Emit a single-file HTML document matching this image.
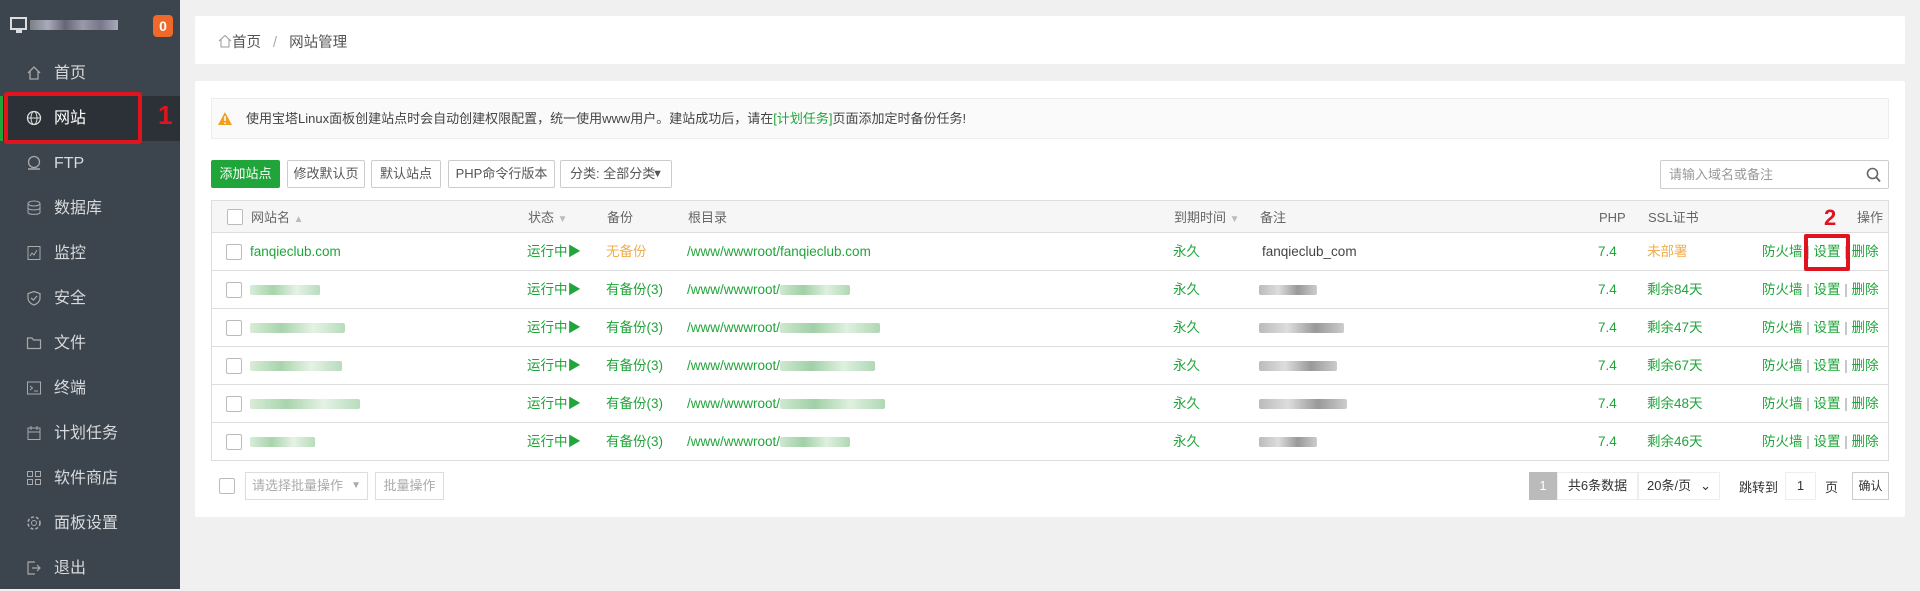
<!DOCTYPE html>
<html><head><meta charset="utf-8"><style>
*{box-sizing:border-box;margin:0;padding:0}
body{width:1920px;height:589px;background:#f0f0f0;font-family:"Liberation Sans","Noto Sans CJK SC",sans-serif;font-size:14px;color:#555;position:relative;overflow:hidden}
.abs{position:absolute}
#side{left:0;top:0;width:180px;height:589px;background:#3c444d}
#logo{left:0;top:0;width:180px;height:51px;background:#3c444d}
.mi{position:absolute;left:0;width:180px;height:45px;color:#d8dadc;font-size:16px;line-height:45px;padding-left:54px}
.mi svg{position:absolute;left:26px;top:14px}
.card{background:#fff;border-radius:2px}
.btn{position:absolute;top:160px;height:28px;border:1px solid #ccc;background:#fff;font-size:13px;line-height:26px;text-align:center;color:#555;border-radius:2px}
.row{position:absolute;left:211px;width:1678px;height:38px;border-bottom:1px solid #ddd;line-height:38px;font-size:13.5px}
.row span{position:absolute}
.g{color:#20a53a}.o{color:#f0ad4e}
.cb{position:absolute;left:15px;top:11px;width:16px;height:16px;border:1px solid #bbb;border-radius:2px;background:#fff}
.blur{display:inline-block;height:10px;vertical-align:middle;border-radius:2px}
</style></head><body>
<div id="side" class="abs"></div>
<div id="logo" class="abs">
 <svg class="abs" style="left:10px;top:17px" width="18" height="17"><rect x="1" y="1" width="15" height="11" fill="none" stroke="#ddd" stroke-width="2"/><rect x="6" y="13" width="6" height="3" fill="#ddd"/></svg>
 <div class="abs" style="left:30px;top:20px;width:88px;height:10px;background:linear-gradient(90deg,#7a8088,#aab 20%,#667 40%,#99a 60%,#778 80%,#aab)"></div>
 <div class="abs" style="left:153px;top:15px;width:20px;height:22px;background:#f0682a;border-radius:4px;color:#fff;font-weight:bold;text-align:center;line-height:22px;font-size:14px">0</div>
</div>
<div class="abs" style="left:0;top:96px;width:180px;height:45px;background:#2c3137;border-left:3px solid #20a53a"></div>
<div class="mi" style="top:51px"><svg width="16" height="16"><path d="M2 8L8 2L14 8M4 6V14H12V6" fill="none" stroke="#aaa" stroke-width="1.3"/></svg>首页</div>
<div class="mi" style="top:96px;color:#fff"><svg width="16" height="16"><circle cx="8" cy="8" r="6.5" fill="none" stroke="#ddd" stroke-width="1.3"/><ellipse cx="8" cy="8" rx="3" ry="6.5" fill="none" stroke="#ddd"/><path d="M1.5 8H14.5" stroke="#ddd"/></svg>网站</div>
<div class="mi" style="top:141px"><svg width="16" height="16"><circle cx="8" cy="7" r="5.5" fill="none" stroke="#aaa" stroke-width="1.3"/><path d="M2 14H14" stroke="#aaa" stroke-width="1.5"/></svg>FTP</div>
<div class="mi" style="top:186px"><svg width="16" height="16"><ellipse cx="8" cy="3.5" rx="6" ry="2.5" fill="none" stroke="#aaa"/><path d="M2 3.5V12.5C2 15 14 15 14 12.5V3.5M2 8C2 10.5 14 10.5 14 8" fill="none" stroke="#aaa"/></svg>数据库</div>
<div class="mi" style="top:231px"><svg width="16" height="16"><rect x="2" y="1.5" width="12" height="13" fill="none" stroke="#aaa"/><path d="M4 11L6 8L8 10L11 5" fill="none" stroke="#aaa"/></svg>监控</div>
<div class="mi" style="top:276px"><svg width="16" height="16"><path d="M8 1.5L14 3.5V8C14 11.5 11 14 8 15C5 14 2 11.5 2 8V3.5Z M5 8L7.5 10L11 6" fill="none" stroke="#aaa" stroke-width="1.2"/></svg>安全</div>
<div class="mi" style="top:321px"><svg width="16" height="16"><path d="M1.5 3H6L7.5 5H14.5V13.5H1.5Z" fill="none" stroke="#aaa" stroke-width="1.2"/></svg>文件</div>
<div class="mi" style="top:366px"><svg width="16" height="16"><rect x="1.5" y="2" width="13" height="12" fill="none" stroke="#aaa"/><path d="M4 6L6.5 8L4 10M8 11H12" fill="none" stroke="#aaa"/></svg>终端</div>
<div class="mi" style="top:411px"><svg width="16" height="16"><rect x="2" y="3" width="12" height="11.5" fill="none" stroke="#aaa"/><path d="M5 1V5M11 1V5M2 7H14" stroke="#aaa"/></svg>计划任务</div>
<div class="mi" style="top:456px"><svg width="16" height="16"><rect x="1.5" y="1.5" width="5" height="5" fill="none" stroke="#aaa"/><rect x="9.5" y="1.5" width="5" height="5" fill="none" stroke="#aaa"/><rect x="1.5" y="9.5" width="5" height="5" fill="none" stroke="#aaa"/><rect x="9.5" y="9.5" width="5" height="5" fill="none" stroke="#aaa"/></svg>软件商店</div>
<div class="mi" style="top:501px"><svg width="16" height="16"><circle cx="8" cy="8" r="2.5" fill="none" stroke="#aaa"/><circle cx="8" cy="8" r="6" fill="none" stroke="#aaa" stroke-width="1.6" stroke-dasharray="3 2"/></svg>面板设置</div>
<div class="mi" style="top:546px"><svg width="16" height="16"><path d="M9 2H2V14H9M6 8H14M11 5L14 8L11 11" fill="none" stroke="#aaa" stroke-width="1.2"/></svg>退出</div>
<div class="abs" style="left:4px;top:92px;width:138px;height:52px;border:4px solid #e0141e;border-radius:3px"></div>
<div class="abs" style="left:158px;top:100px;color:#e0141e;font-size:26px;font-weight:bold">1</div>

<div class="abs card" style="left:195px;top:16px;width:1710px;height:48px"></div>
<div class="abs" style="left:218px;top:31px;font-size:14.5px;color:#555"><svg width="14" height="14" style="vertical-align:-1px"><path d="M1 7L7 1.5L13 7M3 5.5V13H11V5.5" fill="none" stroke="#999"/></svg>首页 <span style="color:#aaa;margin:0 8px">/</span> 网站管理</div>

<div class="abs card" style="left:195px;top:81px;width:1710px;height:436px"></div>
<div class="abs" style="left:211px;top:98px;width:1678px;height:41px;background:#fafafa;border:1px solid #eee;font-size:13px;line-height:40px;padding-left:34px;color:#444">使用宝塔Linux面板创建站点时会自动创建权限配置，统一使用www用户。建站成功后，请在<span class="g">[计划任务]</span>页面添加定时备份任务!</div>
<svg class="abs" style="left:218px;top:112px" width="14" height="13"><path d="M7 0L14 13H0Z" fill="#f0a020"/><path d="M7 4V9M7 10.5V12" stroke="#fff" stroke-width="1.5"/></svg>

<div class="btn" style="left:211px;width:69px;background:#20a53a;border-color:#20a53a;color:#fff">添加站点</div>
<div class="btn" style="left:287px;width:78px">修改默认页</div>
<div class="btn" style="left:371px;width:70px">默认站点</div>
<div class="btn" style="left:448px;width:107px">PHP命令行版本</div>
<div class="btn" style="left:560px;width:112px;text-align:left;padding-left:9px">分类: 全部分类<span style="position:absolute;right:8px;top:0;font-size:11px">▼</span></div>
<div class="abs" style="left:1660px;top:160px;width:229px;height:29px;border:1px solid #ccc;border-radius:2px;font-size:13px;color:#999;line-height:27px;padding-left:8px">请输入域名或备注
<svg class="abs" style="right:7px;top:6px" width="15" height="16"><circle cx="6.5" cy="6.5" r="5" fill="none" stroke="#666" stroke-width="1.6"/><path d="M10 10L14 14.5" stroke="#666" stroke-width="1.8"/></svg></div>

<div class="abs" style="left:211px;top:200px;width:1678px;height:261px;border:1px solid #ddd"></div>
<div class="row" style="top:200px;height:33px;line-height:33px;background:#f6f6f6;border:1px solid #ddd;color:#666;font-size:13px">
<div class="cb" style="top:8px"></div>
<span style="left:39px">网站名 <span style="position:static;color:#bbb;font-size:10px">▲</span></span>
<span style="left:316px">状态 <span style="position:static;color:#bbb;font-size:10px">▼</span></span>
<span style="left:395px">备份</span><span style="left:476px">根目录</span>
<span style="left:962px">到期时间 <span style="position:static;color:#bbb;font-size:10px">▼</span></span>
<span style="left:1048px">备注</span><span style="left:1387px">PHP</span><span style="left:1436px">SSL证书</span><span style="left:1645px">操作</span>
</div>

<div class="row" style="top:233px"><div class="cb"></div><span class="g" style="left:39px">fanqieclub.com</span><span class="g" style="left:316px">运行中▶</span><span class="o" style="left:395px">无备份</span><span class="g" style="left:476px">/www/wwwroot/fanqieclub.com</span><span class="g" style="left:962px">永久</span><span style="left:1051px;color:#444">fanqieclub_com</span><span class="g" style="left:1387px">7.4</span><span class="o" style="left:1436px">未部署</span><span class="g" style="left:1551px">防火墙 <span style="position:static;color:#999">|</span> 设置 <span style="position:static;color:#999">|</span> 删除</span></div>
<div class="row" style="top:271px"><div class="cb"></div><span style="left:39px"><i class="blur" style="width:70px;background:linear-gradient(90deg,#d8ecd8,#a8d4ac,#e5f2e5,#b8dcbc)"></i></span><span class="g" style="left:316px">运行中▶</span><span class="g" style="left:395px">有备份(3)</span><span class="g" style="left:476px">/www/wwwroot/<i class="blur" style="width:70px;background:linear-gradient(90deg,#cfe8d0,#a0d0a6,#dff0df,#b0d8b4)"></i></span><span class="g" style="left:962px">永久</span><span style="left:1048px"><i class="blur" style="width:58px;background:linear-gradient(90deg,#bbb,#ddd,#999,#ccc)"></i></span><span class="g" style="left:1387px">7.4</span><span class="g" style="left:1436px">剩余84天</span><span class="g" style="left:1551px">防火墙 <span style="position:static;color:#999">|</span> 设置 <span style="position:static;color:#999">|</span> 删除</span></div>
<div class="row" style="top:309px"><div class="cb"></div><span style="left:39px"><i class="blur" style="width:95px;background:linear-gradient(90deg,#d8ecd8,#a8d4ac,#e5f2e5,#b8dcbc)"></i></span><span class="g" style="left:316px">运行中▶</span><span class="g" style="left:395px">有备份(3)</span><span class="g" style="left:476px">/www/wwwroot/<i class="blur" style="width:100px;background:linear-gradient(90deg,#cfe8d0,#a0d0a6,#dff0df,#b0d8b4)"></i></span><span class="g" style="left:962px">永久</span><span style="left:1048px"><i class="blur" style="width:85px;background:linear-gradient(90deg,#bbb,#ddd,#999,#ccc)"></i></span><span class="g" style="left:1387px">7.4</span><span class="g" style="left:1436px">剩余47天</span><span class="g" style="left:1551px">防火墙 <span style="position:static;color:#999">|</span> 设置 <span style="position:static;color:#999">|</span> 删除</span></div>
<div class="row" style="top:347px"><div class="cb"></div><span style="left:39px"><i class="blur" style="width:92px;background:linear-gradient(90deg,#d8ecd8,#a8d4ac,#e5f2e5,#b8dcbc)"></i></span><span class="g" style="left:316px">运行中▶</span><span class="g" style="left:395px">有备份(3)</span><span class="g" style="left:476px">/www/wwwroot/<i class="blur" style="width:95px;background:linear-gradient(90deg,#cfe8d0,#a0d0a6,#dff0df,#b0d8b4)"></i></span><span class="g" style="left:962px">永久</span><span style="left:1048px"><i class="blur" style="width:78px;background:linear-gradient(90deg,#bbb,#ddd,#999,#ccc)"></i></span><span class="g" style="left:1387px">7.4</span><span class="g" style="left:1436px">剩余67天</span><span class="g" style="left:1551px">防火墙 <span style="position:static;color:#999">|</span> 设置 <span style="position:static;color:#999">|</span> 删除</span></div>
<div class="row" style="top:385px"><div class="cb"></div><span style="left:39px"><i class="blur" style="width:110px;background:linear-gradient(90deg,#d8ecd8,#a8d4ac,#e5f2e5,#b8dcbc)"></i></span><span class="g" style="left:316px">运行中▶</span><span class="g" style="left:395px">有备份(3)</span><span class="g" style="left:476px">/www/wwwroot/<i class="blur" style="width:105px;background:linear-gradient(90deg,#cfe8d0,#a0d0a6,#dff0df,#b0d8b4)"></i></span><span class="g" style="left:962px">永久</span><span style="left:1048px"><i class="blur" style="width:88px;background:linear-gradient(90deg,#bbb,#ddd,#999,#ccc)"></i></span><span class="g" style="left:1387px">7.4</span><span class="g" style="left:1436px">剩余48天</span><span class="g" style="left:1551px">防火墙 <span style="position:static;color:#999">|</span> 设置 <span style="position:static;color:#999">|</span> 删除</span></div>
<div class="row" style="top:423px;border-bottom:none"><div class="cb"></div><span style="left:39px"><i class="blur" style="width:65px;background:linear-gradient(90deg,#d8ecd8,#a8d4ac,#e5f2e5,#b8dcbc)"></i></span><span class="g" style="left:316px">运行中▶</span><span class="g" style="left:395px">有备份(3)</span><span class="g" style="left:476px">/www/wwwroot/<i class="blur" style="width:70px;background:linear-gradient(90deg,#cfe8d0,#a0d0a6,#dff0df,#b0d8b4)"></i></span><span class="g" style="left:962px">永久</span><span style="left:1048px"><i class="blur" style="width:58px;background:linear-gradient(90deg,#bbb,#ddd,#999,#ccc)"></i></span><span class="g" style="left:1387px">7.4</span><span class="g" style="left:1436px">剩余46天</span><span class="g" style="left:1551px">防火墙 <span style="position:static;color:#999">|</span> 设置 <span style="position:static;color:#999">|</span> 删除</span></div>

<div class="abs" style="left:1804px;top:234px;width:46px;height:37px;border:4px solid #e0141e;border-radius:2px"></div>
<div class="abs" style="left:1824px;top:205px;color:#e0141e;font-size:22px;font-weight:bold">2</div>

<div class="abs" style="left:219px;top:478px;width:16px;height:16px;border:1px solid #bbb;border-radius:2px"></div>
<div class="abs" style="left:245px;top:472px;width:123px;height:28px;border:1px solid #ddd;font-size:13px;color:#aaa;line-height:26px;padding-left:6px">请选择批量操作<span style="position:absolute;right:6px;font-size:10px">▼</span></div>
<div class="abs" style="left:375px;top:472px;width:69px;height:28px;border:1px solid #ddd;font-size:13px;color:#aaa;line-height:26px;text-align:center">批量操作</div>
<div class="abs" style="left:1529px;top:472px;width:28px;height:28px;background:#bbb;color:#fff;font-size:13px;line-height:28px;text-align:center">1</div>
<div class="abs" style="left:1557px;top:472px;width:81px;height:28px;border:1px solid #eee;font-size:13px;color:#333;line-height:26px;text-align:center">共6条数据</div>
<div class="abs" style="left:1638px;top:472px;width:82px;height:28px;border:1px solid #eee;font-size:13px;color:#333;line-height:26px;padding-left:8px">20条/页<span style="position:absolute;right:8px">⌄</span></div>
<div class="abs" style="left:1739px;top:477px;font-size:13px;color:#333">跳转到</div>
<div class="abs" style="left:1785px;top:472px;width:31px;height:28px;border:1px solid #eee;font-size:13px;color:#333;line-height:26px;text-align:center">1</div>
<div class="abs" style="left:1825px;top:477px;font-size:13px;color:#333">页</div>
<div class="abs" style="left:1852px;top:472px;width:37px;height:28px;border:1px solid #ccc;font-size:12px;color:#333;line-height:26px;text-align:center">确认</div>
</body></html>
